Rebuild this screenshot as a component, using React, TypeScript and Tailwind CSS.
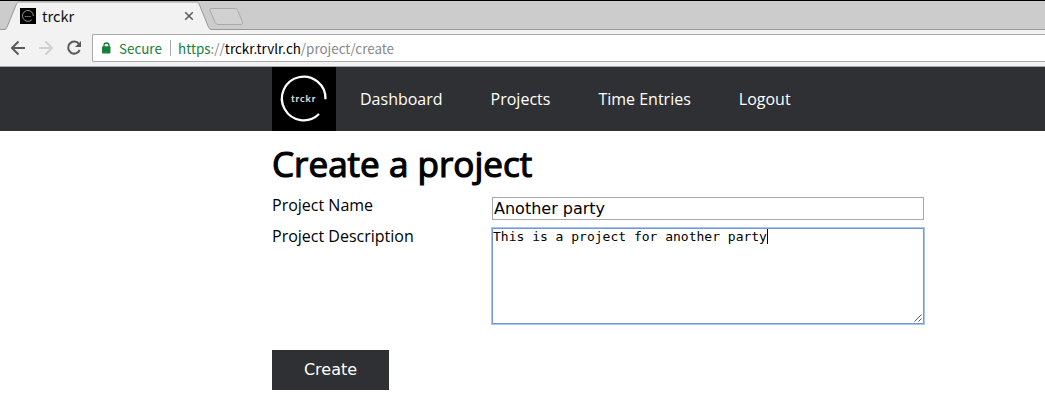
import React from 'react';

const LogoMark = ({ className }: { className: string }) => (
  <svg className={className} viewBox="0 0 64 64" fill="none">
    <rect width="64" height="64" fill="#000" />
    <path d="M53.5 32.3A21.8 21.8 0 1 0 47 47" stroke="#fff" strokeWidth="2.3" />
    <text x="19" y="35.3" fontSize="9.8" fontFamily="Lato" fontWeight="700" fill="#e0e0e0" letterSpacing="0.9">
      trckr
    </text>
  </svg>
);

const TabStrip = () => (
  <div className="relative flex h-[30px] items-center border-t border-black bg-[#cccccc] pl-5 pt-px">
    <svg className="absolute left-0 top-0 h-[29px] w-full" fill="none">
      <path d="M0 28.5H2000" stroke="#999" />
      <path d="M4 29C6 29 6.500 28 7.500 25L16 4C17 1.500 17.500 1 19.500 1H196C198 1 198.500 1.500 199.500 4L208 25C209 28 210 29 212 29Z" fill="#f2f2f2" />
      <path d="M0 28.500H4C6 28.500 6.500 27.500 7.500 25L16 4C17 1.500 17.500 1 19.500 1H196C198 1 198.500 1.500 199.500 4L208 25C209 27.500 210 28.500 212 28.500" stroke="#999" />
      <path d="M211 7.500H235Q237 7.500 237.700 9.500L242.500 21Q243 23.500 241 23.500H218Q216 23.500 215.200 21.500L210 9.500Q209.200 7.500 211 7.500Z" fill="#d1d1d1" stroke="#a9a9a9" />
    </svg>
    <LogoMark className="relative size-4" />
    <span className="relative ml-[6px] w-[141px] font-['Noto_Sans_CJK_SC',sans-serif] text-[14.6px] leading-[20px] text-[#111]">trckr</span>
    <svg className="relative size-3" viewBox="0 0 12 12" stroke="#5a5a5a" strokeWidth="1.500">
      <path d="M2.200 2.200L9.800 9.800M9.800 2.200L2.200 9.800" />
    </svg>
  </div>
);

const Toolbar = () => (
  <div className="flex h-[37px] items-start border-b border-[#aaa] bg-[#f2f2f2] pt-1">
    <svg className="h-7 w-[92px]" viewBox="0 0 92 28" fill="none" strokeWidth="2">
      <path d="M25 14H12.500M18.500 7.500L12 14L18.500 20.500" stroke="#5a5a5a" />
      <path d="M39 14H51.500M45.500 7.500L52 14L45.500 20.500" stroke="#d0d0d0" />
      <path d="M79 10A6 6 0 1 0 79.700 16" stroke="#5a5a5a" />
      <path d="M81 7V13H75Z" fill="#5a5a5a" />
    </svg>
    <div className="flex h-7 flex-1 items-center rounded-l-[2px] border-y border-l border-[#aaa] bg-white pl-[9px] font-['Noto_Sans_CJK_SC',sans-serif] text-[13.4px] leading-[20px]">
      <svg className="h-3 w-[9px]" viewBox="0 0 9 12">
        <path d="M2 5V3.500A2.500 2.500 0 0 1 7 3.500V5" fill="none" stroke="#188038" strokeWidth="1.300" />
        <rect y="4.300" width="8.500" height="7.200" rx="1" fill="#188038" />
      </svg>
      <span className="ml-[8px] w-[51px] text-[#188038]">Secure</span>
      <span className="mr-[7px] h-4 w-px bg-[#aaa]" />
      <span className="whitespace-nowrap text-[#888]">
        <span className="text-[#188038]">https</span>://<span className="text-black">trckr.trvlr.ch</span>/project/create
      </span>
    </div>
  </div>
);

export default function App() {
  return (
    <div className="h-[417px] w-full overflow-hidden bg-white font-['Noto_Sans',sans-serif]">
      <TabStrip />
      <Toolbar />
      <nav className="flex h-16 items-center bg-[#2f3034] pl-[272px] font-['Open_Sans',sans-serif] text-[16px] text-white">
        <LogoMark className="size-16" />
        <div className="ml-6 flex gap-12">
          <a>Dashboard</a>
          <a>Projects</a>
          <a>Time Entries</a>
          <a>Logout</a>
        </div>
      </nav>
      <main className="ml-[272px] w-[652px] font-['Open_Sans',sans-serif] text-[16px] text-black">
        <h1 className="h-[66px] pt-2 text-[35.1px] leading-[48px] [-webkit-text-stroke:1.2px_black]">Create a project</h1>
        <div className="flex h-[31px] justify-between">
          <label className="leading-[17px]">Project Name</label>
          <input
            className="h-[23px] w-[432px] border border-[#a9a9a9] px-px font-['DejaVu_Sans',sans-serif] text-[16px] outline-none"
            defaultValue="Another party"
          />
        </div>
        <div className="flex h-[122px] justify-between">
          <label className="leading-[17px]">Project Description</label>
          <div className="relative h-24 w-[432px]">
            <textarea
              className="block h-24 w-[432px] resize-none border border-[#6f97dc] p-0 font-['DejaVu_Sans_Mono',monospace] text-[13px] leading-[15px] shadow-[0_0_0_1px_#a5c3f5] outline-none"
              defaultValue="This is a project for another party"
            />
            <span className="absolute left-[275px] top-px h-[15px] w-px bg-black" />
            <svg className="absolute bottom-[2px] right-[2px] size-2" viewBox="0 0 8 8" stroke="#555">
              <path d="M.5 7.500L7.500 .5M4.500 7.500L7.500 4.500" />
            </svg>
          </div>
        </div>
        <button className="block h-10 w-[117px] bg-[#2f3034] font-['DejaVu_Sans',sans-serif] text-[16px] text-white">Create</button>
      </main>
    </div>
  );
}
